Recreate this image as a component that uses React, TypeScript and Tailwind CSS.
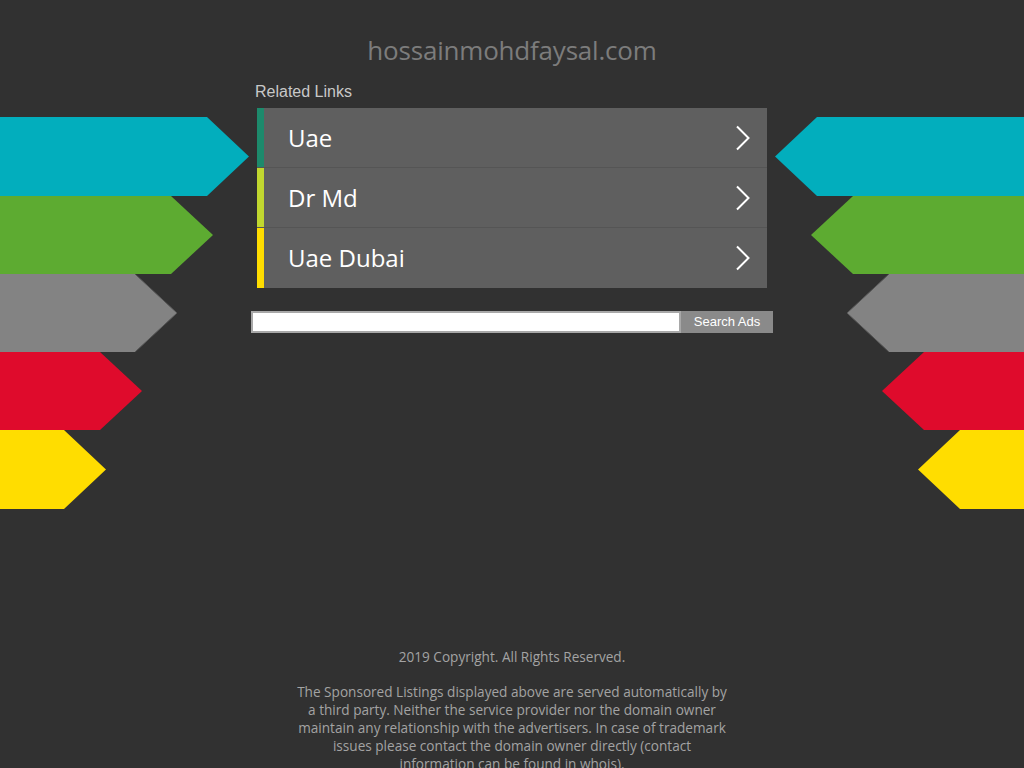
import React from 'react';

const links = [
  { label: 'Uae', bar: 'bg-[#1d8a6c]' },
  { label: 'Dr Md', bar: 'bg-[#c1d72f]' },
  { label: 'Uae Dubai', bar: 'bg-[#ffdd00]' },
];

const bands = [
  { color: '#02aebd', y: 0, h: 79 },
  { color: '#5dab31', y: 79, h: 78 },
  { color: '#838383', y: 157, h: 78 },
  { color: '#df0b2c', y: 235, h: 78 },
  { color: '#ffdd00', y: 313, h: 79 },
];

const leftBody = [207, 171, 135, 100, 64];

const Arrows = ({ side }: { side: 'left' | 'right' }) => (
  <svg width="251" height="392" viewBox="0 0 251 392" className="block">
    {bands.map((b, i) => {
      const body = leftBody[i];
      const tip = body + 42;
      const mid = b.y + b.h / 2;
      const x = (v: number) => (side === 'left' ? v : 251 - v);
      const pts = `${x(0)},${b.y} ${x(body)},${b.y} ${x(tip)},${mid} ${x(body)},${b.y + b.h} ${x(0)},${b.y + b.h}`;
      return (
        <g key={i}>
          <polygon points={pts} fill={b.color} />
          {i === 2 && (
            <polyline
              points={`${x(body)},${b.y} ${x(tip)},${mid} ${x(body)},${b.y + b.h}`}
              fill="none"
              stroke="#555"
              strokeWidth="1"
            />
          )}
        </g>
      );
    })}
  </svg>
);

const Chevron = () => (
  <svg width="16" height="26" viewBox="0 0 16 26" fill="none">
    <path d="M2 1.5 L13.5 13 L2 24.5" stroke="#fff" strokeWidth="2" />
  </svg>
);

export default function App() {
  return (
    <div className="min-h-screen w-full bg-[#313131] overflow-hidden font-['Open_Sans',sans-serif]">
      <h1 className="pt-[33px] text-center text-[26px] leading-[34px] text-[#7c7c7c] font-normal tracking-[-0.2px]">
        hossainmohdfaysal.com
      </h1>

      <div className="flex items-start justify-between mt-[15px]">
        <div className="mt-[35px]">
          <Arrows side="left" />
        </div>

        <div className="w-[522px]">
          <div className="ml-[4px] font-['Liberation_Sans',sans-serif] text-[16px] leading-[20px] text-[#c8c8c8]">
            Related Links
          </div>
          <div className="ml-[6px] mt-[6px] w-[510px]">
            {links.map((l) => (
              <div key={l.label} className="flex h-[60px] bg-[#5f5f5f] border-b border-[#555] last:border-b-0">
                <div className={`w-[7px] ${l.bar}`} />
                <div className="flex flex-1 items-center justify-between pl-[24px] pr-[16px]">
                  <span className="text-[24px] text-white">{l.label}</span>
                  <Chevron />
                </div>
              </div>
            ))}
          </div>

          <div className="mt-[23px] flex h-[22px] font-['Liberation_Sans',sans-serif]">
            <div className="w-[430px] h-full bg-white border-2 border-[#a8a8a8]" />
            <div className="w-[92px] h-full bg-[#8a8a8a] text-white text-[13px] leading-[22px] text-center">
              Search Ads
            </div>
          </div>
        </div>

        <div className="mt-[35px]">
          <Arrows side="right" />
        </div>
      </div>

      <div className="mt-[139px] text-center text-[13.6px] text-[#a3a3a3] leading-[18px]">
        <p>2019 Copyright. All Rights Reserved.</p>
        <p className="mx-auto mt-[17px] w-[480px]">
          The Sponsored Listings displayed above are served automatically by
          <br />
          a third party. Neither the service provider nor the domain owner
          <br />
          maintain any relationship with the advertisers. In case of trademark
          <br />
          issues please contact the domain owner directly (contact
          <br />
          information can be found in whois).
        </p>
      </div>
    </div>
  );
}
